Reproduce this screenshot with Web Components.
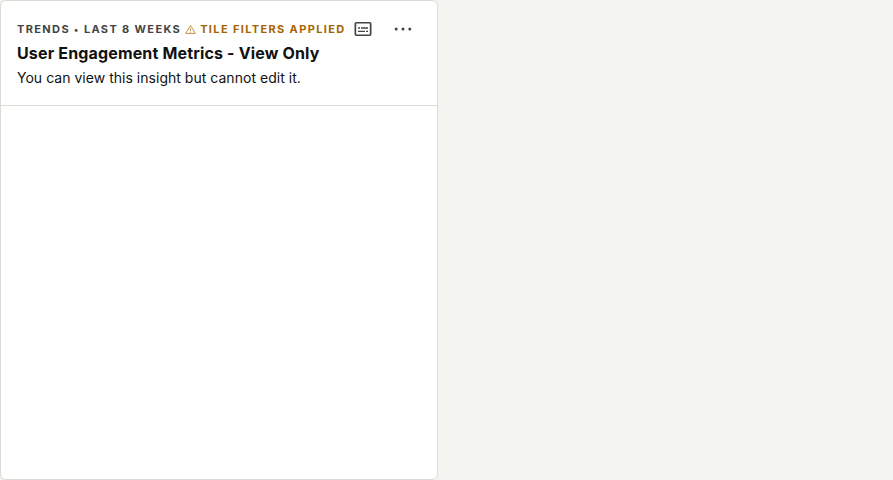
<!DOCTYPE html>
<html lang="en"><head><meta charset="utf-8"><title>Insight</title>
<style>body{margin:0;background:#f3f4ef;height:480px;font-family:Inter,"Liberation Sans",sans-serif;font-feature-settings:"calt" 0;color:#111}.dot{font-size:9px;line-height:1;vertical-align:0;margin:0 .2px}</style></head>
<body>
<insight-card>
<insight-meta slot="meta"><span>Trends <span class="dot">•</span> Last 8 weeks</span><filter-warning slot="warning">Tile filters applied</filter-warning></insight-meta>
<card-controls slot="controls"></card-controls>
<span slot="title">User Engagement Metrics - View Only</span>
<span slot="description">You can view this insight but cannot edit it.</span>
</insight-card>
<script>
const define=(name,html)=>customElements.define(name,class extends HTMLElement{constructor(){super();this.attachShadow({mode:'open'}).innerHTML=html}});
define('filter-warning',`<style>:host{display:flex;align-items:center;gap:4px;color:#a56300}svg{width:11px;height:11px}</style><svg viewBox="0 0 24 24" fill="none" stroke="currentColor" stroke-width="1.5" stroke-linejoin="round"><path d="M12 3 22.5 20.5H1.5Z"/><path d="M12 9v6m0 1.8v1.8"/></svg><span><slot></slot></span>`);
define('insight-meta',`<style>:host{display:flex;align-items:center;gap:4px;font-size:11px;line-height:16px;font-weight:700;letter-spacing:1.36px;text-transform:uppercase;color:#444;white-space:nowrap}</style><slot></slot><slot name="warning"></slot>`);
define('card-controls',`<style>:host{display:flex;flex:none;gap:16px;color:#444}svg{width:24px;height:24px;display:block}</style><svg viewBox="0 0 24 24" fill="currentColor"><path fill-rule="evenodd" d="M5.2 5h13.6A1.7 1.7 0 0 1 20.5 6.7v10.6a1.7 1.7 0 0 1-1.7 1.7H5.2a1.7 1.7 0 0 1-1.7-1.7V6.7A1.7 1.7 0 0 1 5.2 5Zm0 1.6v10.8h13.6V6.6ZM7 10.2h2v1.5H7ZM10 10.2h7v1.5h-7ZM7 13.7h7v1.4H7ZM15 13.7h2v1.4h-2Z"/></svg><svg viewBox="0 0 24 24" fill="currentColor"><circle cx="5.2" cy="12" r="1.5"/><circle cx="12" cy="12" r="1.5"/><circle cx="18.8" cy="12" r="1.5"/></svg>`);
define('insight-card',`<style>:host{display:block;box-sizing:border-box;width:438px;height:480px;background:#fff;border:1px solid #dadbd2;border-radius:6px;overflow:hidden}header{box-sizing:border-box;height:105px;padding:16px;border-bottom:1px solid #dadbd2}.top{display:flex;justify-content:space-between;align-items:center;height:24px;padding-right:6px}.title{font-size:16px;line-height:24px;font-weight:700;letter-spacing:.155px;margin:0}.description{font-size:14px;line-height:20px;letter-spacing:.025px;padding-top:3px}</style><header><div class="top"><slot name="meta"></slot><slot name="controls"></slot></div><h1 class="title"><slot name="title"></slot></h1><div class="description"><slot name="description"></slot></div></header>`);
</script></body></html>
